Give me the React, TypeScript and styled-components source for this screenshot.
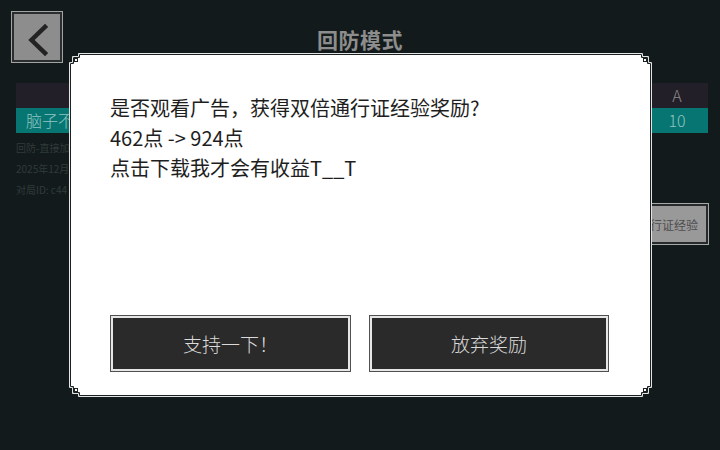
import React from "react";
import styled, { createGlobalStyle } from "styled-components";

const GlobalStyle = createGlobalStyle`
  html, body { margin: 0; padding: 0; background: #131a1b; }
  body { font-family: "Noto Sans CJK SC", "Noto Sans", sans-serif; }
  * { box-sizing: border-box; }
`;

const Page = styled.div`
  position: relative;
  width: 720px;
  height: 450px;
  overflow: hidden;
  background: #131a1b;
  padding: 12px 12px 0 12px;
`;

const Header = styled.div`
  display: grid;
  grid-template-columns: 50px 1fr 50px;
  align-items: center;
  height: 50px;
`;

const BackButton = styled.div`
  width: 50px;
  height: 50px;
  background: #8e8d8e;
  border: 2px solid #2a2e2f;
  box-shadow: 0 0 0 1px #a3a3a3;
  display: flex;
  align-items: center;
  justify-content: flex-start;
`;

const Title = styled.div`
  text-align: center;
  font-size: 21px;
  font-weight: 700;
  color: #8d8d8d;
  padding-top: 4px;
  letter-spacing: 0.5px;
`;

const Content = styled.div`
  padding-left: 4px;
  display: flex;
  flex-direction: column;
`;

const Table = styled.div`
  margin-top: 21px;
  display: grid;
  grid-template-columns: 1fr 62px;
`;

const Cell = styled.div<{ $bg: string; $color: string; $center?: boolean }>`
  height: 25px;
  background: ${(p) => p.$bg};
  color: ${(p) => p.$color};
  font-size: 16px;
  font-weight: 300;
  line-height: 25px;
  padding-left: ${(p) => (p.$center ? "0" : "10px")};
  text-align: ${(p) => (p.$center ? "center" : "left")};
  white-space: nowrap;
  overflow: hidden;
`;

const Info = styled.div`
  margin-top: 4px;
  font-size: 10px;
  line-height: 21px;
  color: #2f3a3a;
`;

const SideRow = styled.div`
  display: flex;
  justify-content: flex-end;
  margin-top: 4px;
`;

const SideButton = styled.div`
  width: 92px;
  height: 40px;
  background: #9a999a;
  border: 2px solid #262a2b;
  box-shadow: 0 0 0 1px #a8a8a8;
  display: flex;
  align-items: center;
  justify-content: flex-end;
  padding-right: 8px;
  font-size: 12px;
  color: #4d4d4d;
  white-space: nowrap;
`;

const Overlay = styled.div`
  position: absolute;
  inset: 0;
  display: flex;
  align-items: center;
  justify-content: center;
`;

const Dialog = styled.div`
  position: relative;
  width: 579px;
  height: 340px;
  margin-left: 1px;
  background: #ffffff;
  box-shadow: 0 0 0 1px #1b2222, 0 0 0 2px #e4e4e4;
  padding: 38px 41px 23px 39px;
  display: flex;
  flex-direction: column;
  justify-content: space-between;
`;

const Message = styled.div`
  font-size: 20px;
  line-height: 30px;
  color: #1e1e1e;
`;

const Actions = styled.div`
  display: grid;
  grid-template-columns: 241px 240px;
  column-gap: 18px;
`;

const ActionButton = styled.div`
  height: 57px;
  background: #2a2a2a;
  border: 1px solid #505050;
  box-shadow: inset 0 0 0 2px #e6e6e6;
  display: flex;
  align-items: center;
  justify-content: center;
  font-size: 19px;
  font-weight: 300;
  color: #dadada;
`;

type Pos = "tl" | "tr" | "bl" | "br";

const CornerWrap = styled.div<{ $pos: Pos }>`
  position: absolute;
  width: 14px;
  height: 14px;
  ${(p) => (p.$pos[0] === "t" ? "top: -2px;" : "bottom: -2px;")}
  ${(p) => (p.$pos[1] === "l" ? "left: -2px;" : "right: -2px;")}
  transform: scale(${(p) => (p.$pos[1] === "l" ? 1 : -1)}, ${(p) => (p.$pos[0] === "t" ? 1 : -1)});
  line-height: 0;
`;

const Corner = ({ pos }: { pos: Pos }) => (
  <CornerWrap $pos={pos}>
    <svg width="14" height="14" viewBox="0 0 14 14">
      <rect x="0" y="0" width="14" height="14" fill="#ffffff" />
      <polygon points="0,0 10,0 10,4 4,4 4,10 0,10" fill="#131a1b" />
      <path d="M14 0.5 H9.5 V3.5 H3.5 V9.5 H0.5 V14" fill="none" stroke="#e4e4e4" strokeWidth="1" />
      <path d="M14 1.5 H10.5 V4.5 H4.5 V10.5 H1.5 V14" fill="none" stroke="#1b2222" strokeWidth="1" />
      <rect x="5.5" y="5.5" width="3" height="3" fill="#ffffff" stroke="#1b2222" strokeWidth="1" />
    </svg>
  </CornerWrap>
);

export default function App() {
  return (
    <>
      <GlobalStyle />
      <Page>
        <Header>
          <BackButton>
            <svg width="46" height="46" viewBox="0 0 46 46">
              <path d="M31 13 L17.5 26 L31 39" fill="none" stroke="#232323" strokeWidth="4.5" strokeLinecap="square" />
            </svg>
          </BackButton>
          <Title>回防模式</Title>
          <div />
        </Header>
        <Content>
          <Table>
            <Cell $bg="#221f28" $color="#8a8a8a"></Cell>
            <Cell $bg="#221f28" $color="#8a8a8a" $center>A</Cell>
            <Cell $bg="#077571" $color="#8fc5c2">脑子不好使的玩家</Cell>
            <Cell $bg="#077571" $color="#8fc5c2" $center>10</Cell>
          </Table>
          <Info>
            <div>回防-直接加入</div>
            <div>2025年12月</div>
            <div>对局ID: c44</div>
          </Info>
          <SideRow>
            <SideButton>领取通行证经验</SideButton>
          </SideRow>
        </Content>
        <Overlay>
          <Dialog>
            <Corner pos="tl" />
            <Corner pos="tr" />
            <Corner pos="bl" />
            <Corner pos="br" />
            <Message>
              <div>是否观看广告，获得双倍通行证经验奖励?</div>
              <div>462点 -&gt; 924点</div>
              <div>点击下载我才会有收益T__T</div>
            </Message>
            <Actions>
              <ActionButton>支持一下！</ActionButton>
              <ActionButton>放弃奖励</ActionButton>
            </Actions>
          </Dialog>
        </Overlay>
      </Page>
    </>
  );
}
